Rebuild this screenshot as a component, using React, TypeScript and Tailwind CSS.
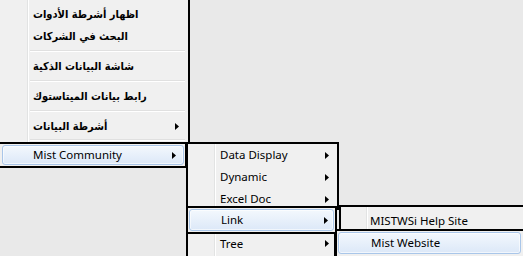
import React from "react";

type Item = { label: string; arrow?: boolean; rtl?: boolean; sep?: boolean };

const mainItems: Item[] = [
  { label: "اظهار أشرطة الأدوات", rtl: true },
  { label: "البحث في الشركات", rtl: true },
  { label: "", sep: true },
  { label: "شاشة البيانات الذكية", rtl: true },
  { label: "", sep: true },
  { label: "رابط بيانات الميتاستوك", rtl: true },
  { label: "", sep: true },
  { label: "أشرطة البيانات", rtl: true, arrow: true },
];

const subItems: Item[] = [
  { label: "Data Display", arrow: true },
  { label: "Dynamic", arrow: true },
  { label: "Excel Doc", arrow: true },
];

const Arrow = () => (
  <svg width="4" height="7" viewBox="0 0 4 7" className="shrink-0">
    <polygon points="0,0 4,3.5 0,7" fill="#000" />
  </svg>
);

const Label = ({ item }: { item: Item }) =>
  item.rtl ? (
    <span dir="rtl" className="font-['DejaVu_Sans_Condensed','DejaVu_Sans',sans-serif] font-bold text-[11px] leading-none">
      {item.label}
    </span>
  ) : (
    <span className="font-['Noto_Sans',sans-serif] text-[11.5px] leading-none">{item.label}</span>
  );

const Separator = () => (
  <div className="h-[8px] flex flex-col justify-center pl-[30px] pr-[3px]">
    <div className="h-px bg-[#e0e0e0]" />
    <div className="h-px bg-white" />
  </div>
);

const Row = ({ item, pl, pr }: { item: Item; pl: string; pr: string }) => (
  <div className={`h-[22px] flex items-center justify-between ${pl} ${pr}`}>
    <Label item={item} />
    {item.arrow && <Arrow />}
  </div>
);

const Hilite = ({ children, className }: { children: React.ReactNode; className: string }) => (
  <div
    className={`flex items-center justify-between rounded-[3px] border border-[#a9c6e9] bg-gradient-to-b from-[#f3f8fd] to-[#dce8f8] shadow-[inset_0_0_0_1px_rgba(255,255,255,0.6)] ${className}`}
  >
    {children}
  </div>
);

const Gutter = ({ className }: { className: string }) => (
  <div className={`absolute top-0 bottom-0 w-[2px] border-l border-l-[#e2e3e3] border-r border-r-white ${className}`} />
);

export default function App() {
  return (
    <div className="relative w-[523px] h-[256px] overflow-hidden bg-[#e9e9e9] text-black">
      {/* main menu */}
      <div className="absolute left-0 top-0 flex flex-col items-start">
        <div className="relative w-[190px] h-[144px] bg-[#f0f0f0] border-r-2 border-b-2 border-black pt-[3px]">
          <Gutter className="left-[27px]" />
          <div className="relative flex flex-col">
            {mainItems.map((it, i) =>
              it.sep ? <Separator key={i} /> : <Row key={i} item={it} pl="pl-[33px]" pr="pr-[9px]" />
            )}
            <div className="h-[4px] flex flex-col justify-end pl-[30px] pr-[3px]">
              <div className="h-px bg-[#e0e0e0]" />
              <div className="h-px bg-white" />
            </div>
          </div>
        </div>
        <div className="w-[187px] h-[24px] bg-[#f0f0f0] border-r-2 border-b-2 border-black pl-[2px] pr-[1px] py-[1px]">
          <Hilite className="h-full pl-[30px] pr-[7px]">
            <Label item={{ label: "Mist Community" }} />
            <Arrow />
          </Hilite>
        </div>
      </div>

      {/* first submenu */}
      <div className="absolute left-[186px] top-[142px] flex flex-col items-start">
        <div className="relative w-[153px] bg-[#f0f0f0] border-2 border-b-0 border-black">
          <Gutter className="left-[26px]" />
          <div className="relative flex flex-col">
            {subItems.map((it, i) => (
              <Row key={i} item={it} pl="pl-[32px]" pr="pr-[8px]" />
            ))}
          </div>
        </div>
        <div className="relative -mt-[4px] w-[151px] h-[28px] bg-[#f0f0f0] border-2 border-black p-[1px]">
          <Hilite className="h-full pl-[31px] pr-[5px]">
            <Label item={{ label: "Link" }} />
            <Arrow />
          </Hilite>
        </div>
        <div className="relative w-[150px] h-[22px] bg-[#f0f0f0] border-x-2 border-black">
          <Gutter className="left-[26px]" />
          <div className="relative h-full flex items-center justify-between pl-[32px] pr-[5px] pb-[3px]">
            <Label item={{ label: "Tree" }} />
            <Arrow />
          </div>
        </div>
      </div>

      {/* second submenu */}
      <div className="absolute left-[335px] top-[205px] right-0 flex flex-col">
        <div className="relative ml-[4px] h-[26px] bg-[#f0f0f0] border-t-2 border-l-2 border-black">
          <Gutter className="left-[25px]" />
          <div className="relative h-full flex items-center pl-[29px] pt-[3px]">
            <Label item={{ label: "MISTWSi Help Site" }} />
          </div>
        </div>
        <div className="relative -mt-[2px] h-[27px] bg-[#f0f0f0] border-t-2 border-l-2 border-black pl-[1px] pr-[2px] pt-[1px]">
          <Hilite className="h-[22px] pl-[32px]">
            <Label item={{ label: "Mist Website" }} />
          </Hilite>
        </div>
      </div>
    </div>
  );
}
